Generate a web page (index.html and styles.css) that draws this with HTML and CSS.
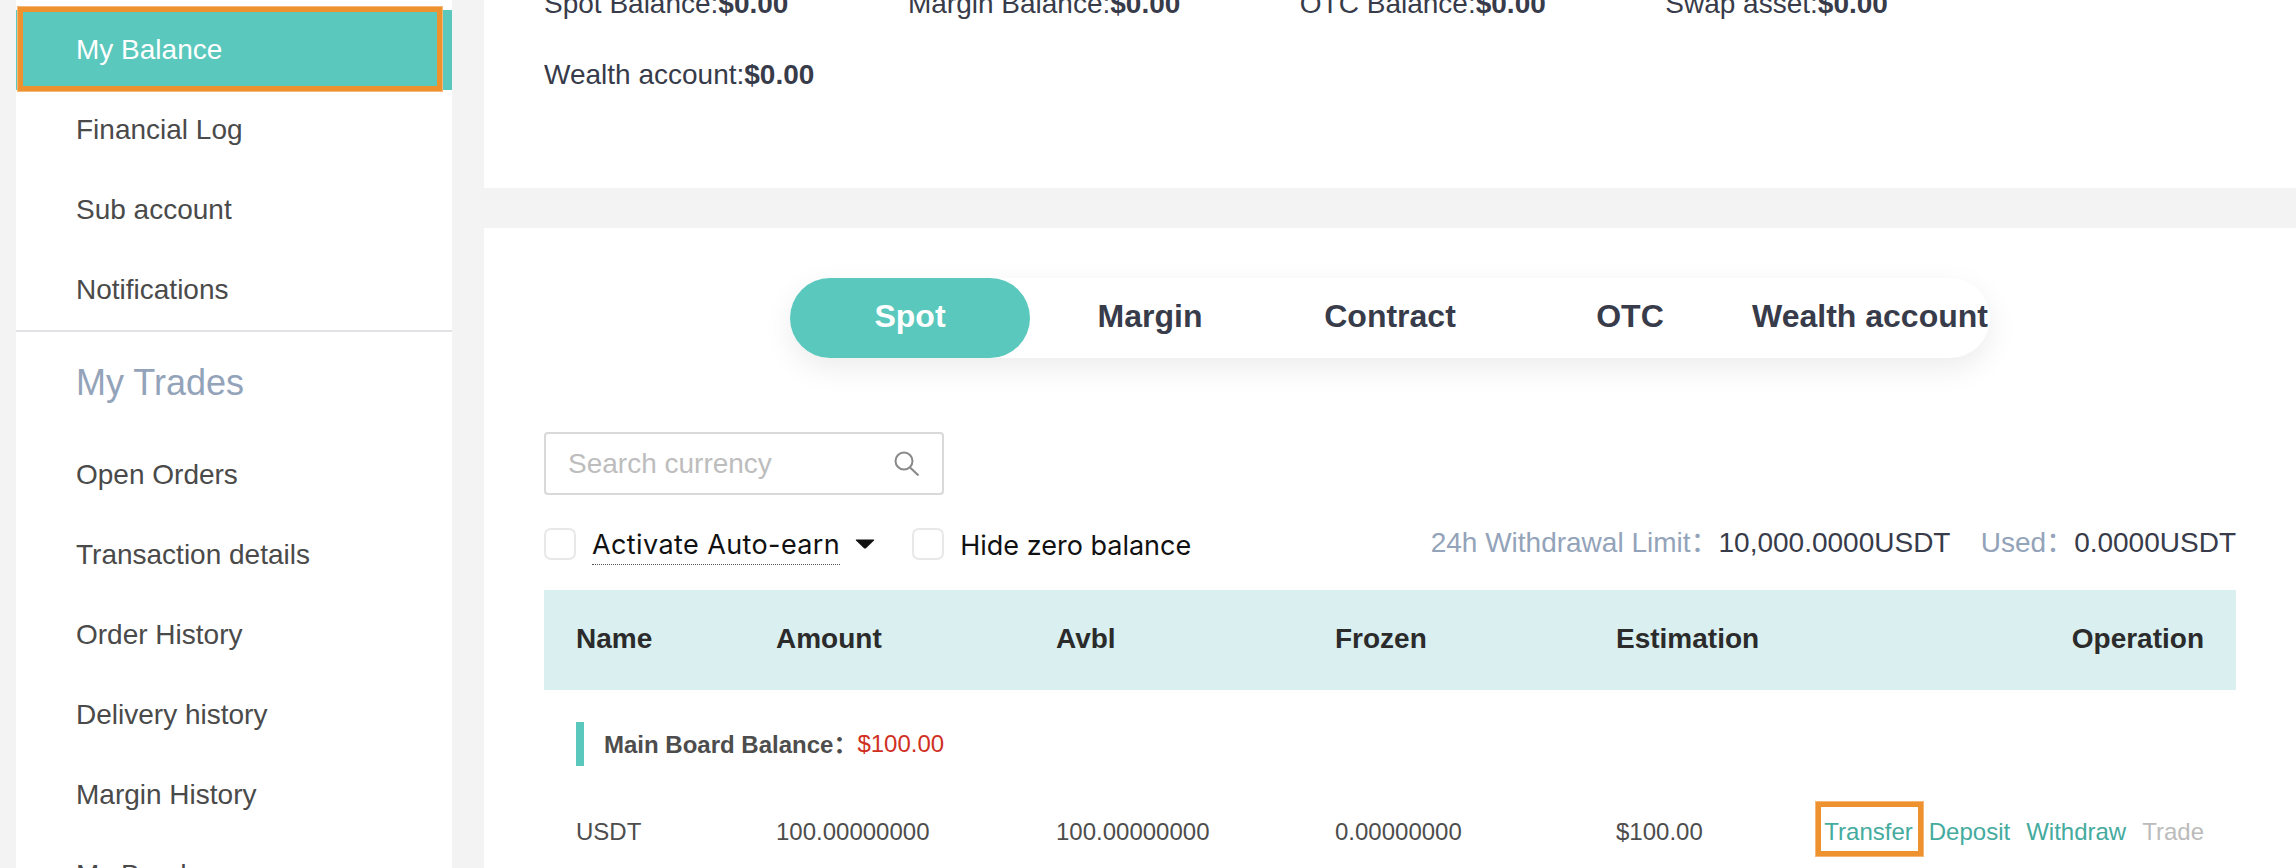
FILE: index.html
```html
<!DOCTYPE html>
<html lang="en">
<head>
    <meta charset="UTF-8">
    <meta name="viewport" content="width=device-width, initial-scale=1.0">
    <title>My Balance</title>
    <link rel="stylesheet" href="styles.css">
</head>
<body>
    <div class="page">
        <aside class="sidebar">
            <a class="nav-item active">My Balance<span class="mark mark-nav"></span></a>
            <a class="nav-item">Financial Log</a>
            <a class="nav-item">Sub account</a>
            <a class="nav-item">Notifications</a>
            <h2 class="nav-title">My Trades</h2>
            <a class="nav-item">Open Orders</a>
            <a class="nav-item">Transaction details</a>
            <a class="nav-item">Order History</a>
            <a class="nav-item">Delivery history</a>
            <a class="nav-item">Margin History</a>
            <a class="nav-item">My Bonds</a>
        </aside>

        <main class="content">
            <section class="panel summary">
                <div class="summary-item">Spot Balance:<b>$0.00</b></div>
                <div class="summary-item">Margin Balance:<b>$0.00</b></div>
                <div class="summary-item">OTC Balance:<b>$0.00</b></div>
                <div class="summary-item">Swap asset:<b>$0.00</b></div>
                <div class="summary-item">Wealth account:<b>$0.00</b></div>
            </section>

            <section class="panel balances">
                <div class="tabs">
                    <div class="tab active">Spot</div>
                    <div class="tab">Margin</div>
                    <div class="tab">Contract</div>
                    <div class="tab">OTC</div>
                    <div class="tab">Wealth account</div>
                </div>

                <div class="search">
                    <input class="search-input" type="text" placeholder="Search currency">
                    <svg class="search-icon" viewBox="0 0 25 25" width="25" height="25">
                        <circle cx="10" cy="10" r="8.5" fill="none" stroke="#888" stroke-width="2"/>
                        <path d="M16 16.5 L24.5 24.5" fill="none" stroke="#888" stroke-width="2"/>
                    </svg>
                </div>

                <div class="filters">
                    <div class="filter-left">
                        <span class="checkbox"></span>
                        <span class="filter-label dotted">Activate Auto-earn</span>
                        <svg class="caret" viewBox="0 0 20 10" width="20" height="10">
                            <path d="M1.5 0.5 H18.5 Q19.8 0.5 19 1.6 L11 9.2 Q10 10 9 9.2 L1 1.6 Q0.2 0.5 1.5 0.5 Z" fill="#111"/>
                        </svg>
                        <span class="checkbox second"></span>
                        <span class="filter-label">Hide zero balance</span>
                    </div>
                    <div class="limits">
                        <span class="muted">24h Withdrawal Limit：</span><span class="limit-value">10,000.0000USDT</span>
                        <span class="muted used">Used：</span><span class="limit-value">0.0000USDT</span>
                    </div>
                </div>

                <div class="table-row table-head">
                    <div>Name</div>
                    <div>Amount</div>
                    <div>Avbl</div>
                    <div>Frozen</div>
                    <div>Estimation</div>
                    <div class="ops">Operation</div>
                </div>

                <div class="board">
                    <span class="board-bar"></span>
                    <span class="board-name">Main Board Balance：</span>
                    <span class="board-value">$100.00</span>
                </div>

                <div class="table-row table-body">
                    <div>USDT</div>
                    <div>100.00000000</div>
                    <div>100.00000000</div>
                    <div>0.00000000</div>
                    <div>$100.00</div>
                    <div class="ops">
                        <a class="op">Transfer<span class="mark mark-op"></span></a>
                        <a class="op">Deposit</a>
                        <a class="op">Withdraw</a>
                        <a class="op off">Trade</a>
                    </div>
                </div>
            </section>
        </main>
    </div>
</body>
</html>
```

FILE: styles.css
```css
* {
    margin: 0;
    padding: 0;
    box-sizing: border-box;
}

html, body {
    width: 100%;
    height: 100%;
    overflow: hidden;
    background-color: #f3f3f3;
    font-family: "Liberation Sans", Arial, "Noto Sans CJK SC", sans-serif;
}

.page {
    display: flex;
    gap: 32px;
    padding-left: 16px;
    margin-top: -31px;
}

.sidebar {
    width: 436px;
    flex-shrink: 0;
    padding-top: 41px;
    background-color: #fff;
}

.nav-item {
    display: block;
    position: relative;
    height: 80px;
    padding-left: 60px;
    line-height: 79px;
    font-size: 28px;
    color: #4a4a4a;
}

.nav-item.active {
    background-color: #5ac8bd;
    color: #fff;
}

.nav-title {
    height: 105px;
    padding-left: 60px;
    border-top: 2px solid #e2e2e6;
    line-height: 102px;
    font-size: 36px;
    font-weight: normal;
    color: #93a3b9;
}

/* orange highlight boxes drawn over the shot */
.mark {
    position: absolute;
    border: 5px solid #ee9230;
    box-shadow: 0 0 0 1px #f6b877;
}

.mark-nav {
    top: -3px;
    left: 2px;
    width: 424px;
    height: 84px;
}

.mark-op {
    top: -16px;
    left: -8px;
    width: 107px;
    height: 54px;
}

.content {
    flex: 1;
    display: flex;
    flex-direction: column;
    gap: 40px;
}

.panel {
    background-color: #fff;
    padding: 0 60px;
}

.summary {
    display: flex;
    flex-wrap: wrap;
    align-content: flex-start;
    height: 219px;
}

.summary-item {
    margin-right: 119.5px;
    line-height: 70.5px;
    font-size: 28px;
    color: #373b4a;
}

.balances {
    height: 700px;
    padding-top: 50px;
}

.tabs {
    display: flex;
    width: 1200px;
    height: 80px;
    margin-left: 246px;
    border-radius: 40px;
    background-color: #fff;
    box-shadow: 0 10px 30px rgba(0,0,0,0.08);
}

.tab {
    width: 240px;
    line-height: 76px;
    text-align: center;
    white-space: nowrap;
    font-size: 32px;
    font-weight: bold;
    color: #373b4a;
}

.tab.active {
    border-radius: 40px;
    background-color: #5ac8bd;
    color: #fff;
}

.search {
    display: flex;
    align-items: center;
    width: 400px;
    height: 63px;
    margin-top: 74px;
    padding: 0 23px 0 22px;
    border: 2px solid #d9d9d9;
    border-radius: 4px;
}

.search-input {
    flex: 1;
    min-width: 0;
    border: none;
    outline: none;
    font-family: inherit;
    font-size: 28px;
    color: #333;
}

.search-input::placeholder {
    color: #bdbdbd;
}

.filters {
    display: flex;
    align-items: center;
    height: 95px;
}

.filter-left {
    display: flex;
    align-items: center;
    margin-top: 6px;
}

.checkbox {
    width: 32px;
    height: 32px;
    margin-right: 16px;
    margin-bottom: 3px;
    border: 2px solid #e8e8e8;
    border-radius: 7px;
}

.checkbox.second {
    margin-left: 37px;
}

.filter-label {
    font-family: Inter, sans-serif;
    font-size: 27px;
    color: #111;
}

.dotted {
    border-bottom: 1px dotted #555;
    line-height: 38px;
    letter-spacing: 0.4px;
}

.caret {
    margin-left: 15px;
    margin-bottom: 3px;
}

.limits {
    margin-left: auto;
    margin-bottom: 6px;
    font-size: 28px;
    color: #373b4a;
    white-space: nowrap;
}

.muted {
    color: #93a3b9;
}

.used {
    margin-left: 23px;
}

.table-row {
    display: grid;
    grid-template-columns: 200px 280px 279px 281px 1fr auto;
    align-items: center;
    padding: 0 32px;
}

.table-head {
    height: 100px;
    padding-bottom: 2px;
    background-color: #d9eff0;
    font-size: 28px;
    font-weight: bold;
    color: #2b2b2b;
}

.ops {
    display: flex;
    justify-content: flex-end;
    gap: 16px;
}

.board {
    display: flex;
    align-items: center;
    height: 44px;
    margin: 32px 0 26px 32px;
    font-size: 24px;
}

.board-bar {
    width: 8px;
    height: 44px;
    margin-right: 20px;
    background-color: #5ac8bd;
}

.board-name {
    margin-bottom: 3px;
    font-weight: bold;
    color: #4d4d4d;
}

.board-value {
    color: #d0301f;
}

.table-body {
    height: 80px;
    font-size: 24px;
    color: #4d4d4d;
}

.op {
    position: relative;
    color: #44ab9e;
}

.op.off {
    color: #bbb;
}
```
